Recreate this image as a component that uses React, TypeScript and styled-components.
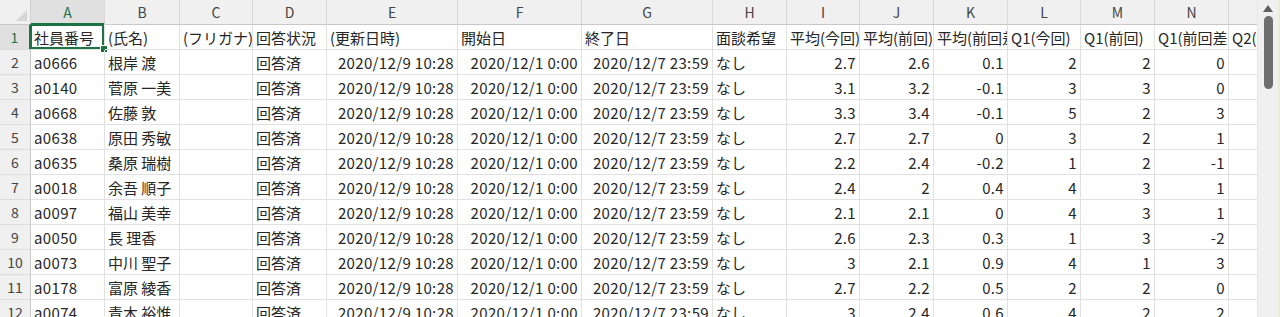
import React from "react";
import styled, { createGlobalStyle, css } from "styled-components";

const GlobalStyle = createGlobalStyle`
  html, body { margin: 0; padding: 0; background: #ffffff; overflow: hidden; }
  body { font-family: "Noto Sans CJK JP", "Noto Sans", sans-serif; }
`;

const COLS = [74, 75, 73, 74, 131, 124, 131, 74, 73, 74, 74, 73, 74, 74, 74];
const LETTERS = ["A", "B", "C", "D", "E", "F", "G", "H", "I", "J", "K", "L", "M", "N", "O"];
const TEMPLATE = `31px ${COLS.map((w) => `${w}px`).join(" ")}`;
const GREEN = "#1e7145";

const Window = styled.div`
  display: flex;
  width: 1280px;
  height: 317px;
  overflow: hidden;
  background: #ffffff;
`;

const Sheet = styled.div`
  flex: 1;
  min-width: 0;
  overflow: hidden;
  display: flex;
  flex-direction: column;
`;

const GridRow = styled.div<{ $h: number }>`
  display: grid;
  grid-template-columns: ${TEMPLATE};
  width: max-content;
  height: ${(p) => p.$h}px;
  flex: none;
`;

const Corner = styled.div`
  box-sizing: border-box;
  background: #f0f0f0;
  border-right: 1px solid #d0d0d0;
  border-bottom: 1px solid #c8c8c8;
  display: flex;
  align-items: flex-end;
  justify-content: flex-end;
  padding: 0 3px 3px 0;
`;

const ColHeader = styled.div<{ $selected?: boolean }>`
  box-sizing: border-box;
  display: flex;
  align-items: center;
  justify-content: center;
  font-size: 14px;
  color: #444444;
  background: #f0f0f0;
  border-right: 1px solid #d8d8d8;
  border-bottom: 1px solid #c8c8c8;
  ${(p) =>
    p.$selected &&
    css`
      background: #e0e0e0;
      color: ${GREEN};
      border-bottom: 2px solid ${GREEN};
    `}
`;

const RowHeader = styled.div<{ $selected?: boolean }>`
  box-sizing: border-box;
  display: flex;
  align-items: center;
  justify-content: center;
  font-size: 14px;
  color: #444444;
  background: #f0f0f0;
  border-right: 1px solid #c8c8c8;
  border-bottom: 1px solid #dcdcdc;
  ${(p) =>
    p.$selected &&
    css`
      background: #e0e0e0;
      color: ${GREEN};
      border-right: 2px solid ${GREEN};
    `}
`;

const Cell = styled.div<{ $right?: boolean; $num?: boolean; $active?: boolean }>`
  position: relative;
  box-sizing: border-box;
  display: flex;
  align-items: center;
  justify-content: ${(p) => (p.$right ? "flex-end" : "flex-start")};
  padding: 1px ${(p) => (p.$right ? "3px" : "1px")} 0 3px;
  font-size: 15px;
  letter-spacing: ${(p) => (p.$num ? "0.35px" : "0")};
  color: #262626;
  white-space: nowrap;
  overflow: hidden;
  border-right: 1px solid #e1e1e1;
  border-bottom: 1px solid #e1e1e1;
  ${(p) =>
    p.$active &&
    css`
      overflow: visible;
      box-shadow: inset 0 0 0 2px ${GREEN};
      margin: -1px 0 0 -1px;
      padding-left: 4px;
      &::after {
        content: "";
        position: absolute;
        right: -4px;
        bottom: -4px;
        width: 6px;
        height: 6px;
        background: ${GREEN};
        border: 1px solid #ffffff;
      }
    `}
`;

const Scrollbar = styled.div`
  flex: none;
  width: 23px;
  box-sizing: border-box;
  background: #f0f0f0;
  border-left: 1px solid #e6e6e6;
  border-right: 2px solid #e8ecd9;
  box-shadow: 1px 0 0 #3f7f3f;
  display: flex;
  flex-direction: column;
  align-items: center;
  padding-top: 5px;
  gap: 4px;
`;

const Thumb = styled.div`
  width: 9px;
  height: 73px;
  border-radius: 5px;
  background: #6e6e6e;
`;

const header = [
  "社員番号", "(氏名)", "(フリガナ)", "回答状況", "(更新日時)", "開始日", "終了日",
  "面談希望", "平均(今回)", "平均(前回)", "平均(前回差", "Q1(今回)", "Q1(前回)", "Q1(前回差", "Q2(今回)",
];

type Rec = [string, string, string, string, string, string, string, string];
const data: Rec[] = [
  ["a0666", "根岸 渡", "2.7", "2.6", "0.1", "2", "2", "0"],
  ["a0140", "菅原 一美", "3.1", "3.2", "-0.1", "3", "3", "0"],
  ["a0668", "佐藤 敦", "3.3", "3.4", "-0.1", "5", "2", "3"],
  ["a0638", "原田 秀敏", "2.7", "2.7", "0", "3", "2", "1"],
  ["a0635", "桑原 瑞樹", "2.2", "2.4", "-0.2", "1", "2", "-1"],
  ["a0018", "余吾 順子", "2.4", "2", "0.4", "4", "3", "1"],
  ["a0097", "福山 美幸", "2.1", "2.1", "0", "4", "3", "1"],
  ["a0050", "長 理香", "2.6", "2.3", "0.3", "1", "3", "-2"],
  ["a0073", "中川 聖子", "3", "2.1", "0.9", "4", "1", "3"],
  ["a0178", "富原 綾香", "2.7", "2.2", "0.5", "2", "2", "0"],
  ["a0074", "青木 裕惟", "3", "2.4", "0.6", "4", "2", "2"],
];

export default function App() {
  return (
    <>
      <GlobalStyle />
      <Window>
        <Sheet>
          <GridRow $h={25}>
            <Corner>
              <svg width="11" height="11" viewBox="0 0 11 11">
                <polygon points="11,0 11,11 0,11" fill="#d6d6d6" />
              </svg>
            </Corner>
            {LETTERS.map((l, i) => (
              <ColHeader key={l} $selected={i === 0}>{l}</ColHeader>
            ))}
          </GridRow>
          <GridRow $h={25}>
            <RowHeader $selected>1</RowHeader>
            {header.map((h, i) => (
              <Cell key={i} $active={i === 0}>{h}</Cell>
            ))}
          </GridRow>
          {data.map((r, ri) => (
            <GridRow key={ri} $h={25}>
              <RowHeader>{ri + 2}</RowHeader>
              <Cell $num>{r[0]}</Cell>
              <Cell>{r[1]}</Cell>
              <Cell />
              <Cell>回答済</Cell>
              <Cell $right $num>2020/12/9 10:28</Cell>
              <Cell $right $num>2020/12/1 0:00</Cell>
              <Cell $right $num>2020/12/7 23:59</Cell>
              <Cell>なし</Cell>
              <Cell $right $num>{r[2]}</Cell>
              <Cell $right $num>{r[3]}</Cell>
              <Cell $right $num>{r[4]}</Cell>
              <Cell $right $num>{r[5]}</Cell>
              <Cell $right $num>{r[6]}</Cell>
              <Cell $right $num>{r[7]}</Cell>
              <Cell />
            </GridRow>
          ))}
        </Sheet>
        <Scrollbar>
          <svg width="10" height="7" viewBox="0 0 10 7">
            <polygon points="5,0 10,7 0,7" fill="#606060" />
          </svg>
          <Thumb />
        </Scrollbar>
      </Window>
    </>
  );
}
